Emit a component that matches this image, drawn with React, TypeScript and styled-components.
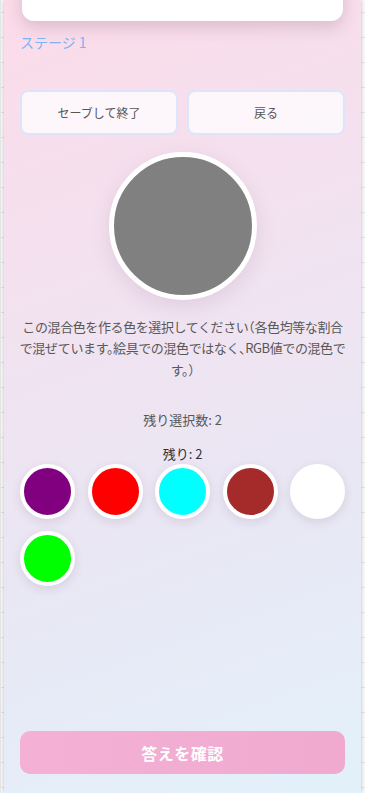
import styled, { createGlobalStyle } from "styled-components";

const GlobalStyle = createGlobalStyle`
  html, body {
    margin: 0;
    padding: 0;
  }
  body {
    background-color: #fafafa;
    background-image:
      linear-gradient(#e6e6e6 1px, transparent 1px),
      linear-gradient(90deg, #e6e6e6 1px, transparent 1px);
    background-size: 25px 25px;
    background-position: 0 12px;
    font-family: "Noto Sans CJK JP", "Noto Sans", sans-serif;
    overflow: hidden;
  }
`;

const Screen = styled.div`
  width: 357px;
  height: 793px;
  margin: 0 auto;
  box-sizing: border-box;
  padding: 0 16px 19px;
  display: flex;
  flex-direction: column;
  background: linear-gradient(160deg, #fcdbe9 0%, #f1e3f1 40%, #e9e7f4 65%, #e2f1fb 100%);
  box-shadow: 0 0 4px rgba(0, 0, 0, 0.25);
  overflow: hidden;
`;

const TopCard = styled.div`
  height: 60px;
  margin: -39px 2px 0;
  background: #fff;
  border-radius: 12px;
  box-shadow: 0 6px 16px rgba(120, 80, 110, 0.24);
`;

const StageLabel = styled.div`
  margin-top: 12px;
  font-size: 14px;
  line-height: 19px;
  color: #7fb2f5;
`;

const ActionRow = styled.div`
  margin-top: 38px;
  display: grid;
  grid-template-columns: 1fr 1fr;
  gap: 9px;
`;

const GhostButton = styled.button`
  height: 45px;
  border: 2px solid #dce5fb;
  border-radius: 8px;
  background: rgba(255, 255, 255, 0.72);
  color: #555;
  font-family: inherit;
  font-size: 12px;
  cursor: pointer;
`;

const TargetSwatch = styled.div<{ $color: string }>`
  width: 148px;
  height: 148px;
  box-sizing: border-box;
  margin: 17px auto 0;
  border-radius: 50%;
  border: 5px solid #fff;
  background: ${(p) => p.$color};
  box-shadow: 0 6px 20px rgba(120, 80, 120, 0.15);
`;

const Instruction = styled.p`
  margin: 16px -2px 0;
  font-size: 13px;
  line-height: 21.3px;
  color: #585858;
  text-align: center;
  font-feature-settings: "halt";
  letter-spacing: -0.4px;
`;

const Counter = styled.div<{ $strong?: boolean }>`
  font-size: 13px;
  line-height: 20px;
  text-align: center;
  color: ${(p) => (p.$strong ? "#333" : "#585858")};
`;

const RemainingSelect = styled(Counter)`
  margin-top: 30px;
`;

const Remaining = styled(Counter)`
  margin-top: 14px;
`;

const Palette = styled.div`
  display: grid;
  grid-template-columns: repeat(5, 55px);
  justify-content: space-between;
  row-gap: 12px;
`;

const ColorDot = styled.button<{ $color: string }>`
  width: 55px;
  height: 55px;
  padding: 0;
  border-radius: 50%;
  border: 4px solid #fff;
  background: ${(p) => p.$color};
  box-shadow: 0 3px 10px rgba(120, 80, 120, 0.16);
  cursor: pointer;
`;

const ConfirmButton = styled.button`
  margin-top: auto;
  height: 43px;
  border: none;
  border-radius: 10px;
  background: linear-gradient(90deg, #f4b0d5, #f0aad0);
  color: #fff;
  font-family: inherit;
  font-size: 16px;
  font-weight: 700;
  letter-spacing: 0.5px;
  cursor: not-allowed;
`;

const colors = ["#800080", "#ff0000", "#00ffff", "#a52a2a", "#ffffff", "#00ff00"];

export default function App() {
  return (
    <>
      <GlobalStyle />
      <Screen>
        <TopCard />
        <StageLabel>ステージ 1</StageLabel>
        <ActionRow>
          <GhostButton>セーブして終了</GhostButton>
          <GhostButton>戻る</GhostButton>
        </ActionRow>
        <TargetSwatch $color="#808080" />
        <Instruction>
          この混合色を作る色を選択してください（各色均等な割合で混ぜています。絵具での混色ではなく、RGB値での混色です。）
        </Instruction>
        <RemainingSelect>残り選択数: 2</RemainingSelect>
        <Remaining $strong>残り: 2</Remaining>
        <Palette>
          {colors.map((c) => (
            <ColorDot key={c} $color={c} aria-label={c} />
          ))}
        </Palette>
        <ConfirmButton disabled>答えを確認</ConfirmButton>
      </Screen>
    </>
  );
}
